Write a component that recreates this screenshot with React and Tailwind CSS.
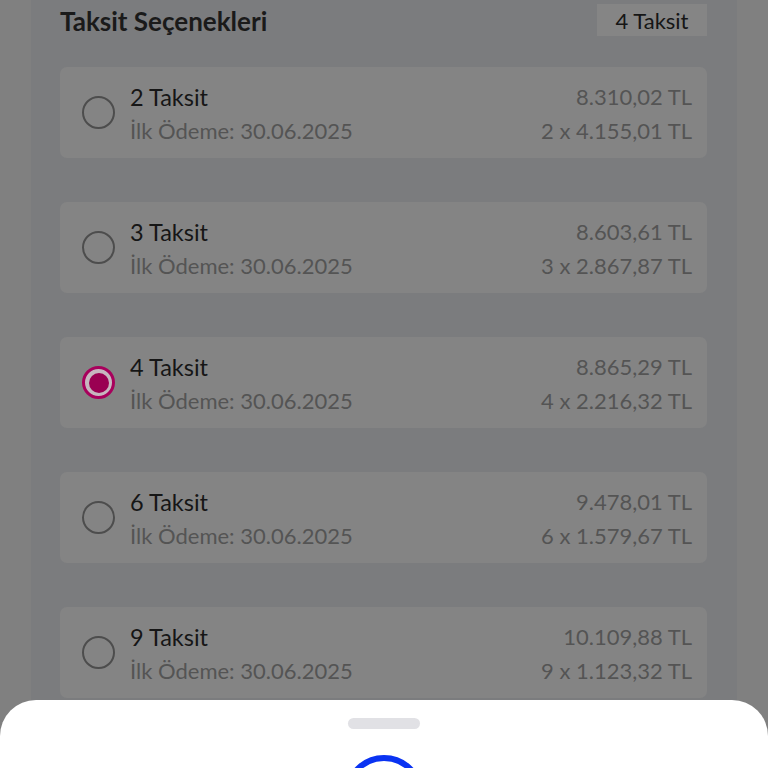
import React from "react";

const options = [
  { count: 2, total: "8.310,02 TL", per: "2 x 4.155,01 TL" },
  { count: 3, total: "8.603,61 TL", per: "3 x 2.867,87 TL" },
  { count: 4, total: "8.865,29 TL", per: "4 x 2.216,32 TL" },
  { count: 6, total: "9.478,01 TL", per: "6 x 1.579,67 TL" },
  { count: 9, total: "10.109,88 TL", per: "9 x 1.123,32 TL" },
];

function Radio({ checked }) {
  if (checked) {
    return (
      <div className="w-[33px] h-[33px] shrink-0 rounded-full border-[3px] border-[#a8005c] bg-[#c7b6bf] flex items-center justify-center">
        <div className="w-[20px] h-[20px] rounded-full bg-[#9a0052]" />
      </div>
    );
  }
  return <div className="w-[33px] h-[33px] shrink-0 rounded-full border-[2px] border-[#4d4d4d]" />;
}

function OptionCard({ option, selected }) {
  return (
    <div className="h-[91px] rounded-[7px] bg-[#848484] flex items-center pl-[22px] pr-[15px]">
      <Radio checked={selected} />
      <div className="ml-[15px] flex flex-col gap-[8px] pt-[2px]">
        <span className="text-[23.5px] leading-[26px] text-[#161616]">{option.count} Taksit</span>
        <span className="text-[22px] leading-[26px] text-[#545454]">İlk Ödeme: 30.06.2025</span>
      </div>
      <div className="ml-auto flex flex-col items-end gap-[8px] pt-[2px]">
        <span className="text-[22px] leading-[26px] text-[#545454]">{option.total}</span>
        <span className="text-[22px] leading-[26px] text-[#545454]">{option.per}</span>
      </div>
    </div>
  );
}

export default function App() {
  const selected = 4;

  return (
    <div
      className="relative w-[768px] h-[768px] overflow-hidden bg-[#808080]"
      style={{ fontFamily: "Lato, 'Open Sans', sans-serif" }}
    >
      <div className="mx-[31px] h-full bg-[#7b7c7e] pl-[29px] pr-[30px] pt-[4px]">
        <div className="h-[32px] flex items-center justify-between">
          <h2 className="text-[26px] font-bold text-[#1a1a1a] mt-[2px]">Taksit Seçenekleri</h2>
          <span className="h-[32px] w-[110px] bg-[#858585] flex items-center justify-center text-[22px] text-[#161616]">
            4 Taksit
          </span>
        </div>

        <div className="mt-[31px] flex flex-col gap-[44px]">
          {options.map((o) => (
            <OptionCard key={o.count} option={o} selected={o.count === selected} />
          ))}
        </div>
      </div>

      {/* bottom sheet */}
      <div className="absolute left-0 right-0 top-[700px] bottom-0 bg-white rounded-t-[36px] flex flex-col items-center">
        <div className="mt-[18px] w-[72px] h-[11px] shrink-0 rounded-full bg-[#e1e1e5]" />
        <div className="mt-[26px] w-[80px] h-[80px] shrink-0 rounded-full border-[6px] border-[#0a33f2]" />
      </div>
    </div>
  );
}
